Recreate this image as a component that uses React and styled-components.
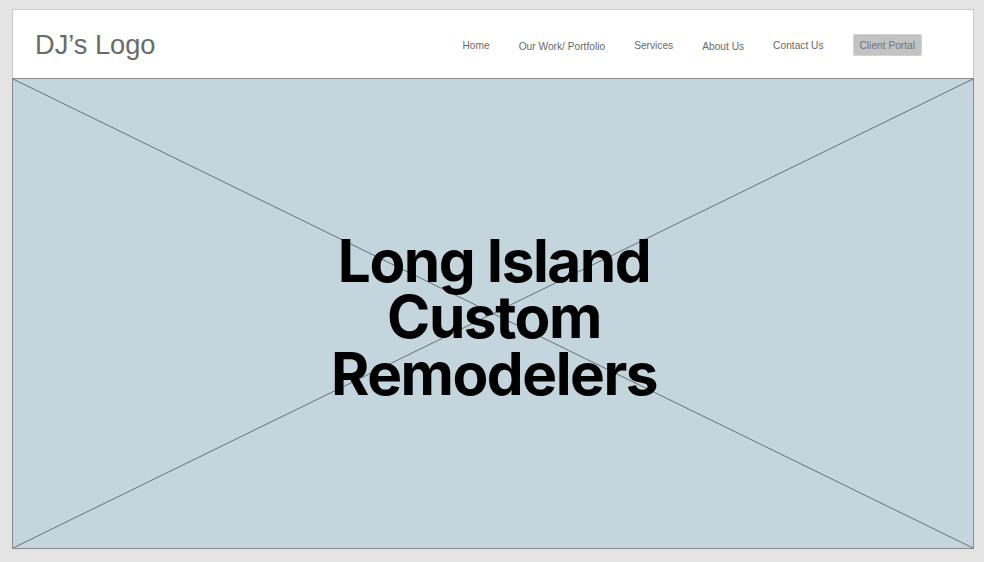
import styled, { createGlobalStyle } from "styled-components";

const GlobalStyle = createGlobalStyle`
    html, body {
        margin: 0;
        padding: 0;
        background: #e4e4e4;
    }
    body {
        font-family: "Liberation Sans", Arial, sans-serif;
    }
`;

const Page = styled.div`
    padding: 9px 0 0 12px;
    width: 962px;
`;

const Header = styled.header`
    height: 68px;
    background: #fff;
    border: 1px solid #c9c9c9;
    border-bottom: none;
    display: flex;
    align-items: center;
    justify-content: space-between;
    padding: 0 51px 0 22px;
`;

const Logo = styled.div`
    font-size: 27.2px;
    color: #6b6b6b;
    margin-top: 2px;
`;

const Nav = styled.nav`
    display: flex;
    align-items: center;
    gap: 29px;
    margin-top: 2px;
`;

const NavItem = styled.span`
    font-size: 10.2px;
    color: #686868;
    margin-top: ${(props) => (props.low ? "2px" : "0")};
`;

const PortalButton = styled.span`
    font-size: 10.2px;
    color: #747474;
    background: #c3c3c3;
    border: 1px solid #d2d2d2;
    border-radius: 2px;
    height: 20px;
    padding: 0 6px;
    display: flex;
    align-items: center;
`;

const Hero = styled.section`
    position: relative;
    height: 469px;
    background: #c5d5dd;
    border: 1px solid #8b8b8b;
    box-shadow: 0 1px 0 #d4d4d4;
    display: flex;
    align-items: center;
    justify-content: center;
`;

const Cross = styled.svg`
    position: absolute;
    inset: 0;
    width: 100%;
    height: 100%;
`;

const Title = styled.h1`
    position: relative;
    margin: 8px 0 0 2px;
    font-family: Inter, "Liberation Sans", sans-serif;
    font-weight: 700;
    font-size: 58.5px;
    line-height: 56.5px;
    letter-spacing: -0.025em;
    color: #000;
    text-align: center;
`;

function App() {
    const links = [
        { label: "Home" },
        { label: "Our Work/ Portfolio", low: true },
        { label: "Services" },
        { label: "About Us", low: true },
        { label: "Contact Us" },
    ];

    return (
        <Page>
            <GlobalStyle />
            <Header>
                <Logo>DJ’s Logo</Logo>
                <Nav>
                    {links.map((link) => (
                        <NavItem key={link.label} low={link.low ? 1 : 0}>
                            {link.label}
                        </NavItem>
                    ))}
                    <PortalButton>Client Portal</PortalButton>
                </Nav>
            </Header>

            {/* Image placeholder */}
            <Hero>
                <Cross viewBox="0 0 100 100" preserveAspectRatio="none">
                    <line x1="0" y1="0" x2="100" y2="100" stroke="#66717a" strokeWidth="1" vectorEffect="non-scaling-stroke" />
                    <line x1="100" y1="0" x2="0" y2="100" stroke="#66717a" strokeWidth="1" vectorEffect="non-scaling-stroke" />
                </Cross>
                <Title>
                    Long Island
                    <br />
                    Custom
                    <br />
                    Remodelers
                </Title>
            </Hero>
        </Page>
    );
}

export default App;
